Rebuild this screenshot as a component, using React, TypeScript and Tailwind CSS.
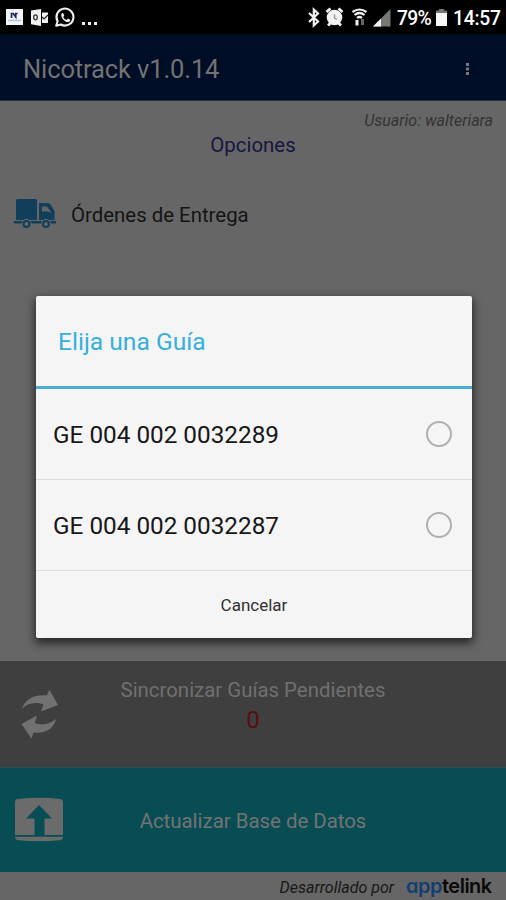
import { useState } from "react";

const guides = ["GE 004 002 0032289", "GE 004 002 0032287"];

const StatusBar = () => (
  <div className="flex h-[34px] shrink-0 items-center justify-between bg-black px-[6px] text-white">
    <svg width="94" height="34" viewBox="0 0 94 34" fill="none">
      <path d="M0 9h17v16H0z" fill="#f4f5f8" />
      <path d="M5.5 18v-4.5h1.6l2.6 3.5v-3.500h2" stroke="#20265c" strokeWidth="1.7" />
      <path d="M2 20.5h13" stroke="#a9c6d8" strokeWidth="1.5" />
      <path d="M25 10.5 35 9v17l-10-1.8z" fill="#f2f2f2" />
      <path d="M36 12.5h6V23h-6z" fill="#f2f2f2" />
      <path d="m36 17 2 2 4-4" stroke="#222" strokeWidth="1.2" />
      <ellipse cx="29.5" cy="17.3" rx="1.8" ry="2.5" stroke="#333" strokeWidth="1.3" />
      <path
        d="M50.200 25.800 51.600 21.300A8.500 8.500 0 1 1 54.900 24.500Z"
        stroke="#f2f2f2"
        strokeWidth="2.1"
        strokeLinejoin="round"
      />
      <path
        d="M55.300 14.200c.7-1.500 1.800-1.300 2.200-.4l.7 1.600c0 .7-.8 1.100-1 1.500.7 1.500 2 2.500 3.400 3l1.300-1.300 2.300 1.100c.4.700-.6 2.300-2 2.400-3.400.1-7.500-4.300-6.900-7.900Z"
        fill="#f2f2f2"
      />
      <path d="M76 22h3v3h-3zm6 0h3v3h-3zm6 0h3v3h-3z" fill="#f2f2f2" />
    </svg>
    <div className="flex items-center">
      <svg width="86" height="34" viewBox="0 0 86 34" fill="none">
        <path d="m3 13 9 8.500-4.200 4V9.500l4.200 4L3 22" stroke="#f2f2f2" strokeWidth="2.200" />
        <circle cx="28.5" cy="17.5" r="7.8" fill="#f2f2f2" />
        <path d="m20.500 12 4-3.500M36.500 12l-4-3.500M22 25.500l3-3M35 25.500l-3-3" stroke="#f2f2f2" strokeWidth="2.800" />
        <path d="M28.500 14.500v3.500l2.500 1.500" stroke="#999" strokeWidth="1.400" />
        <path d="M46.500 12q7-5 14 0M48.500 15q5-4 10 0M51 18q2.500-2 5 0" stroke="#f2f2f2" strokeWidth="2.200" />
        <path d="M51 20v5.500" stroke="#eee" strokeWidth="3" />
        <path d="M56.500 19v6" stroke="#666" strokeWidth="3" />
        <path d="M67 26.500 84.500 9v17.500z" fill="#777" />
        <path d="M67 26.500 75 18.500v8z" fill="#f2f2f2" />
      </svg>
      <span className="ml-[5px] w-[36px] origin-left scale-x-[0.92] whitespace-nowrap pt-px text-[21px] font-medium leading-[34px] tracking-[-0.8px]">
        79%
      </span>
      <svg className="ml-[2px]" width="13" height="34" viewBox="0 0 13 34">
        <path d="M4 9h5v1.500h3v4H1v-4h3z" fill="#777" />
        <path d="M1 13h11v13H1z" fill="#f7f7f7" />
      </svg>
      <span className="ml-[5px] w-[47px] origin-left scale-x-[0.92] whitespace-nowrap pt-px text-[21px] font-medium leading-[34px] tracking-[-0.3px]">
        14:57
      </span>
    </div>
  </div>
);

const TruckIcon = () => (
  <svg width="44" height="32" viewBox="0 0 44 32" fill="none">
    <path d="M3.500 1h18a1.500 1.500 0 0 1 1.500 1.500V22H2V2.500A1.500 1.500 0 0 1 3.500 1Z" fill="#103e5b" />
    <path d="M25 5h8.500q2 0 3 1.500l4 6.500v9H25z" fill="#103e5b" />
    <path d="M28 8.500h5l4.500 6.500L34 13.500h-6z" fill="#666" />
    <path d="M0 23h42v2.500H0z" fill="#103e5b" />
    <circle cx="12.5" cy="26" r="5" fill="#666" />
    <circle cx="32" cy="26" r="5" fill="#666" />
    <circle cx="12.5" cy="26" r="3" stroke="#103e5b" strokeWidth="2" />
    <circle cx="32" cy="26" r="3" stroke="#103e5b" strokeWidth="2" />
  </svg>
);

const SyncIcon = () => (
  <svg width="38" height="50" viewBox="0 0 38 50" fill="#717171">
    <path d="M1 20C4 10.500 13 5 25.500 6.500L28.500 1l8.500 15L20 22.500l2.500-7C13 12.500 6 14.500 1 20Z" />
    <path d="M35 30c-2 9-10 15-22.500 13.500L10.500 49.500.5 35 16 26.500 13.800 34c8 3 15 1 21.200-4Z" />
  </svg>
);

const UploadIcon = () => (
  <svg width="50" height="46" viewBox="0 0 50 46">
    <path d="M4 2Q25-.5 46 2q3 .2 3 3.500V38H1V5.500Q1 2 4 2Z" fill="#6b6b6b" />
    <path d="M1 39.800h48q0 3.200-4 3.500-20 1.700-40 0-4-.3-4-3.500Z" fill="#6b6b6b" />
    <path d="M25 8 38 21.500h-7.500V38h-10V21.500H12z" fill="#084d54" />
  </svg>
);

export default function App() {
  const [selected, setSelected] = useState<string | null>(null);

  return (
    <div className="relative flex h-[900px] w-[506px] flex-col overflow-hidden bg-[#666] font-[Roboto,sans-serif]">
      <StatusBar />
      <header className="flex h-[67px] shrink-0 items-center justify-between border-b border-[#28303e] bg-[#000d26] pl-[23px] pr-[36px] pt-[3px]">
        <h1 className="pt-px text-[25.500px] tracking-[-0.12px] text-[#737373]">Nicotrack v1.0.14</h1>
        <svg width="5" height="14" viewBox="0 0 5 14" fill="#777">
          <path d="M1 1h3v3H1zm0 4.500h3v3H1zM1 10h3v3H1z" />
        </svg>
      </header>

      <main className="flex grow flex-col">
        <p className="pr-[13px] pt-[10px] text-right text-[16px] italic leading-5 text-[#343434]">Usuario: walteriara</p>
        <h2 className="text-center text-[20.400px] leading-7 text-[#17153f]">Opciones</h2>
        <div className="mt-[39px] flex items-center gap-[13px] pl-[14px]">
          <TruckIcon />
          <span className="pt-[2px] text-[20.400px] text-[#141414]">Órdenes de Entrega</span>
        </div>
      </main>

      <section className="flex h-[106px] shrink-0 bg-[#3f3f3f] pl-[21px]">
        <div className="pt-[28px]">
          <SyncIcon />
        </div>
        <div className="-ml-[59px] flex w-[506px] flex-col items-center pt-[16px]">
          <span className="text-[20.400px] leading-[26px] text-[#707070]">Sincronizar Guías Pendientes</span>
          <span className="text-[24px] leading-[35px] text-[#560d12]">0</span>
        </div>
      </section>
      <section className="flex h-[105px] shrink-0 items-center border-t border-[#2c5055] bg-[#084d54] pl-[14px]">
        <UploadIcon />
        <span className="-ml-[64px] w-[506px] pt-[3px] text-center text-[20.400px] text-[#737373]">
          Actualizar Base de Datos
        </span>
      </section>
      <footer className="flex h-[28px] shrink-0 items-center justify-end pr-[14px]">
        <span className="pt-[3px] text-[16px] italic text-[#171717]">Desarrollado por</span>
        <span className="ml-[12px] w-[86px] whitespace-nowrap font-[Inter,sans-serif] text-[20px] font-semibold leading-6 tracking-[-0.5px] text-[#090909] [font-feature-settings:'cv11']">
          <span className="text-[#123e72]">app</span>telink
        </span>
      </footer>

      <div className="absolute left-[36px] top-[296px] flex h-[342px] w-[436px] flex-col rounded-[2px] bg-[#f5f5f5] shadow-[0_4px_10px_1px_rgba(0,0,0,0.65)]">
        <div className="flex h-[93px] shrink-0 items-center border-b-[3px] border-[#45afd8] pl-[22px] pt-[3px] text-[24.600px] text-[#36afe0]">
          Elija una Guía
        </div>
        {guides.map((guide) => (
          <button
            key={guide}
            onClick={() => setSelected(guide)}
            className="flex h-[91px] shrink-0 items-center justify-between border-b border-[#dedede] pl-[17px] pr-[20px] text-[24.300px] text-[#171717]"
          >
            <span className="pt-[2px]">{guide}</span>
            <span className="flex size-[26px] items-center justify-center rounded-full border-2 border-[#b0b0b0]">
              {selected === guide && <span className="size-3 rounded-full bg-[#45afd8]" />}
            </span>
          </button>
        ))}
        <button className="grow pt-[3px] text-[17px] text-[#303030]">Cancelar</button>
      </div>
    </div>
  );
}
